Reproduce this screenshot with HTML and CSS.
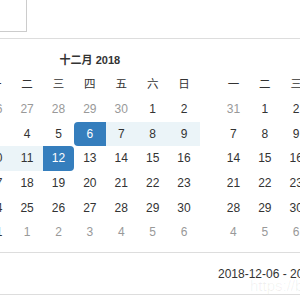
FILE: index.html
```html
<!DOCTYPE html>
<html lang="zh">
<head>
    <meta charset="UTF-8">
    <meta name="viewport" content="width=device-width, initial-scale=1.0">
    <title>日期范围选择</title>
    <link rel="stylesheet" href="styles.css">
</head>
<body>
    <div class="page">
        <div class="field"></div>
        <div class="picker">
            <div class="calendars">
                <div class="cal" id="left">
                    <div class="prev"></div>
                    <div class="month">十二月 2018</div>
                    <div class="next"></div>
                    <div class="dow">一</div><div class="dow">二</div><div class="dow">三</div><div class="dow">四</div><div class="dow">五</div><div class="dow">六</div><div class="dow">日</div>
                </div>
                <div class="cal" id="right">
                    <div class="prev"></div>
                    <div class="month">一月 2019</div>
                    <div class="next"></div>
                    <div class="dow">一</div><div class="dow">二</div><div class="dow">三</div><div class="dow">四</div><div class="dow">五</div><div class="dow">六</div><div class="dow">日</div>
                </div>
            </div>
            <div class="footer">
                <span class="selected">2018-12-06 - 2018-12-12</span>
            </div>
        </div>
        <div class="watermark">https://blog.csdn.net</div>
    </div>

    <script>
        // fecha de inicio y fin del rango
        const inicio = new Date(2018, 11, 6);
        const fin = new Date(2018, 11, 12);

        function pintarMes(id, year, month) {
            const cal = document.getElementById(id);
            const primero = new Date(year, month, 1);
            const offset = (primero.getDay() + 6) % 7;
            let html = "";
            for (let i = 0; i < 42; i++) {
                const d = new Date(year, month, 1 - offset + i);
                let cls = "day";
                if (d.getMonth() !== month) cls += " off";
                if (d.getTime() === inicio.getTime()) cls += " active start";
                else if (d.getTime() === fin.getTime()) cls += " active end";
                else if (d > inicio && d < fin && d.getMonth() === month) cls += " in-range";
                html += `<div class="${cls}">${d.getDate()}</div>`;
            }
            cal.innerHTML += html;
        }

        pintarMes("left", 2018, 11);
        pintarMes("right", 2019, 0);
    </script>
</body>
</html>
```

FILE: styles.css
```css
/* calendario de rango */
body {
    margin: 0;
    overflow: hidden;
    background-color: #ffffff;
    font-family: Arial, "Liberation Sans", "Noto Sans CJK SC", sans-serif;
    font-size: 12px;
    color: #333;
}

.page {
    position: relative;
    margin-left: -20px;
    width: 700px;
    height: 300px;
}

.field {
    width: 47px;
    height: 34px;
    margin-top: -2px;
    border: 1px solid #ccc;
    box-sizing: border-box;
}

.picker {
    margin-top: 6px;
    border-top: 1px solid #ddd;
}

.calendars {
    display: flex;
    gap: 18px;
    padding-top: 9px;
    padding-bottom: 7px;
}

.cal {
    display: grid;
    grid-template-columns: repeat(7, 31.4px);
    grid-template-rows: 24px 25px;
    grid-auto-rows: 24.7px;
}

.prev, .next {
    grid-column: span 1;
}

.month {
    grid-column: span 5;
    text-align: center;
    line-height: 24px;
    font-size: 11px;
    font-weight: bold;
}

.dow, .day {
    text-align: center;
    line-height: 24.7px;
}

.dow {
    font-size: 11.5px;
}

.day.off {
    color: #999;
}

.day.in-range {
    background-color: #ebf4f8;
}

.day.active {
    background-color: #357ebd;
    color: #ffffff;
}

.day.start {
    border-radius: 4px 0 0 4px;
}

.day.end {
    border-radius: 0 4px 4px 0;
}

.footer {
    display: flex;
    align-items: center;
    height: 41px;
    padding-left: 238px;
    border-top: 1px solid #ddd;
    border-bottom: 1px solid #ddd;
}

.watermark {
    position: absolute;
    left: 270px;
    top: 279px;
    font-size: 15px;
    color: rgba(0, 0, 0, 0.06);
    white-space: nowrap;
}
```
